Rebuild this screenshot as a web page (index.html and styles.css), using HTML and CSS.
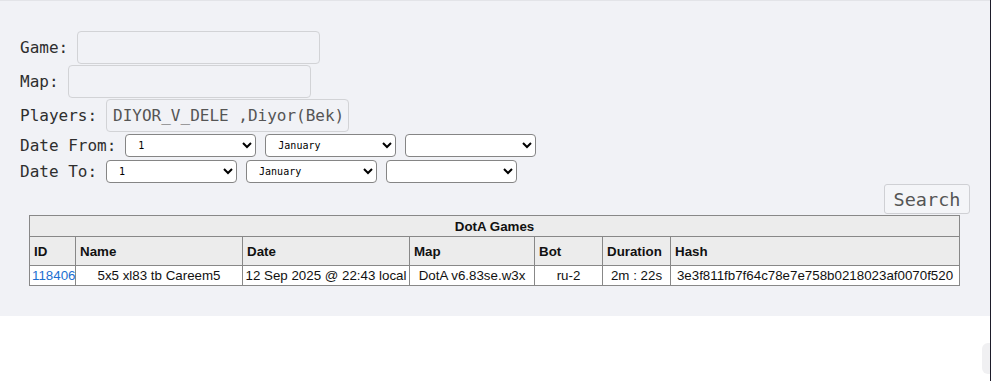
FILE: index.html
```html
<!DOCTYPE html>
<html lang="en">
  <head>
    <meta charset="UTF-8" />
    <meta name="viewport" content="width=device-width, initial-scale=1.0" />
    <title>DotA Games</title>
    <link rel="stylesheet" href="styles.css">
  </head>
  <body>
    <div class="panel">
      <form class="search" onsubmit="return false">
        <div class="row"><label for="game">Game:</label><input type="text" class="field" id="game" /></div>
        <div class="row"><label for="map">Map:</label><input type="text" class="field" id="map" /></div>
        <div class="row"><label for="players">Players:</label><input type="text" class="field" id="players" value="DIYOR_V_DELE ,Diyor(Bek)" /></div>
        <div class="row date from">
          <label>Date From:</label>
          <select><option>1</option></select>
          <select><option>January</option></select>
          <select><option></option></select>
        </div>
        <div class="row date to">
          <label>Date To:</label>
          <select><option>1</option></select>
          <select><option>January</option></select>
          <select><option></option></select>
        </div>
        <div class="actions"><button>Search</button></div>
      </form>
      <table class="games">
        <colgroup>
          <col style="width: 46px" />
          <col style="width: 167px" />
          <col style="width: 167px" />
          <col style="width: 125px" />
          <col style="width: 68px" />
          <col style="width: 68px" />
          <col />
        </colgroup>
        <tr class="title"><th colspan="7">DotA Games</th></tr>
        <tr class="head">
          <th>ID</th><th>Name</th><th>Date</th><th>Map</th><th>Bot</th><th>Duration</th><th>Hash</th>
        </tr>
        <tr>
          <td><a href="#">118406</a></td>
          <td>5x5 xl83 tb Careem5</td>
          <td>12 Sep 2025 @ 22:43 local</td>
          <td>DotA v6.83se.w3x</td>
          <td>ru-2</td>
          <td>2m : 22s</td>
          <td>3e3f811fb7f64c78e7e758b0218023af0070f520</td>
        </tr>
      </table>
    </div>
    <div class="thumb"></div>
  </body>
</html>
```

FILE: styles.css
```css
html,
body {
  margin: 0;
  background: #fff;
}
body {
  min-height: 100vh;
  box-sizing: border-box;
  border-right: 1px solid #1d1c2a;
  font-family: "DejaVu Sans Mono", "Liberation Mono", monospace;
  font-size: 16px;
  color: #2e2e2e;
}
.panel {
  background: #f1f2f6;
  border-top: 1px solid #e3e4e8;
  padding: 30px 20px 30px;
}
.row {
  display: flex;
  align-items: center;
  gap: 9px;
  margin-bottom: 1px;
}
.field {
  width: 243px;
  height: 33px;
  box-sizing: border-box;
  border: 1px solid #d2d3d6;
  border-radius: 4px;
  background: #f1f2f6;
  padding: 0 6px;
  font: 16px "DejaVu Sans Mono", "Liberation Mono", monospace;
  color: #555;
  outline: none;
}
.date {
  margin: 2px 0 0;
}
.date.to {
  margin-top: 3px;
}
.date select {
  width: 131px;
  height: 23px;
  box-sizing: border-box;
  padding: 0 2px 0 8px;
  font: 10px "DejaVu Sans Mono", monospace;
  color: #000;
  background: #fff;
  border: 1px solid #858585;
  border-radius: 4px;
}
.actions {
  display: flex;
  justify-content: flex-end;
  margin-top: 1px;
}
.actions button {
  width: 86px;
  height: 30px;
  padding: 0;
  font: 18.5px "DejaVu Sans Mono", "Liberation Mono", monospace;
  color: #555;
  background: #f4f5f8;
  border: 1px solid #cfd0d4;
  border-radius: 3px;
}
.games {
  width: 931px;
  margin: 1px 0 0 9px;
  border-collapse: collapse;
  table-layout: fixed;
  font: 13.33px "Liberation Sans", Arial, sans-serif;
  color: #111;
}
.games th,
.games td {
  border: 1px solid #888;
  white-space: nowrap;
  overflow: hidden;
}
.games th {
  background: #ececec;
  text-align: left;
  padding: 0 4px;
}
.games .title th {
  height: 20px;
  text-align: center;
}
.games .head th {
  height: 28px;
}
.games td {
  height: 19px;
  background: #fff;
  text-align: center;
  padding: 0 2px;
}
.games a {
  color: #1c6fd1;
  text-decoration: none;
}
.thumb {
  position: fixed;
  right: 1px;
  top: 343px;
  width: 8px;
  height: 31px;
  background: #f0f0f2;
  border-radius: 6px 0 0 6px;
}
```
